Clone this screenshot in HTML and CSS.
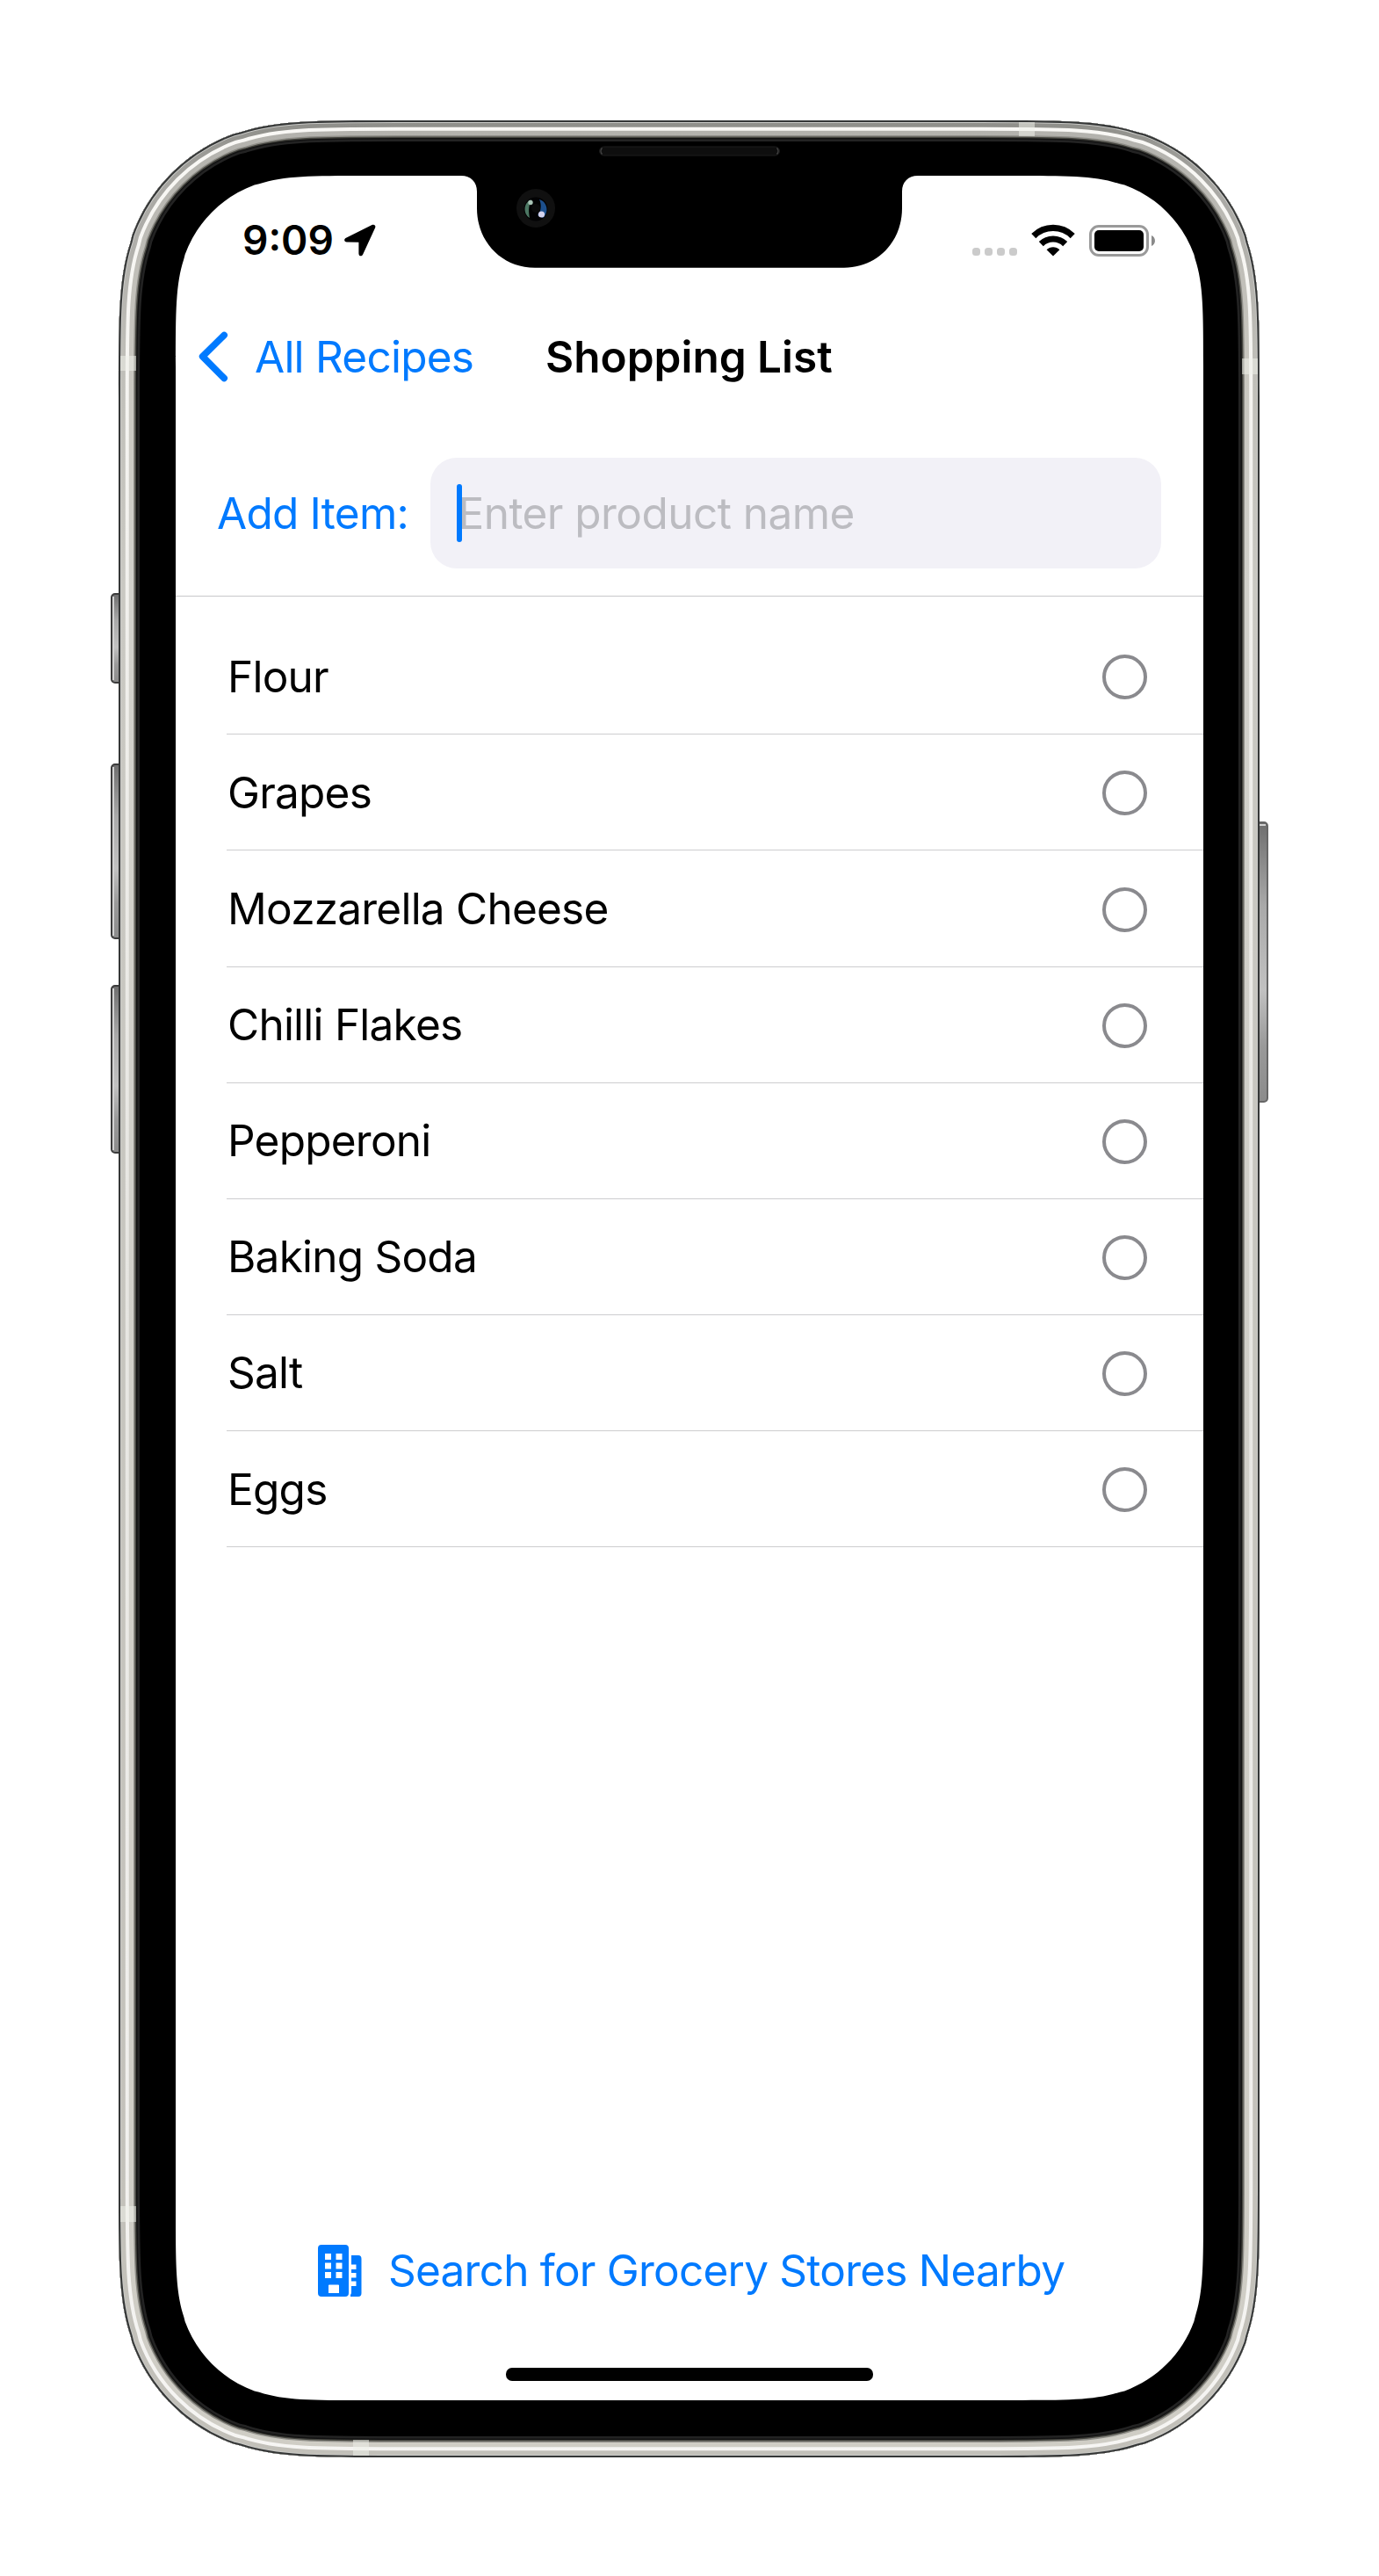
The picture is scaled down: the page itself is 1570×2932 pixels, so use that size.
FILE: index.html
```html
<!DOCTYPE html>
<html lang="en">
<head>
<meta charset="utf-8">
<title>Shopping List</title>
<link rel="stylesheet" href="styles.css">
</head>
<body>
<div class="phone">
  <svg class="frame" viewBox="0 0 1570 2932" aria-hidden="true">
    <defs>
      <path id="body" d="M451.4 137H1117.6C1208.7 137 1254.2 137 1295.3 150.56L1303.3 152.5C1356.8 172 1399 214.2 1418.5 267.7L1420.44 275.7C1434 316.8 1434 362.3 1434 453.4V2480.6C1434 2571.7 1434 2617.2 1420.44 2658.3L1418.5 2666.3C1399 2719.8 1356.8 2762 1303.3 2781.5L1295.3 2783.44C1254.2 2797 1208.7 2797 1117.6 2797H451.4C360.3 2797 314.8 2797 273.7 2783.44L265.7 2781.5C212.2 2762 170 2719.8 150.5 2666.3L148.56 2658.3C135 2617.2 135 2571.7 135 2480.6V453.4C135 362.3 135 316.8 148.56 275.7L150.5 267.7C170 214.2 212.2 172 265.7 152.5L273.7 150.56C314.8 137 360.3 137 451.4 137Z"/>
      <clipPath id="bodyClip"><use href="#body"/></clipPath>
      <linearGradient id="steel" gradientUnits="userSpaceOnUse" x1="0" y1="137" x2="0" y2="2797">
        <stop offset="0" stop-color="#8e8e89"/><stop offset=".03" stop-color="#a9a8a4"/><stop offset=".1" stop-color="#bfbeb8"/><stop offset=".2" stop-color="#c9c8c2"/><stop offset="1" stop-color="#c2c0b9"/>
      </linearGradient>
      <linearGradient id="steelInner" gradientUnits="userSpaceOnUse" x1="0" y1="137" x2="0" y2="2797">
        <stop offset="0" stop-color="#b2b1ac"/><stop offset=".1" stop-color="#c8c6bf"/><stop offset=".2" stop-color="#d2d1cb"/><stop offset="1" stop-color="#cfcdc5"/>
      </linearGradient>
      <linearGradient id="shine" gradientUnits="userSpaceOnUse" x1="0" y1="137" x2="0" y2="2797">
        <stop offset="0" stop-color="#f9f8f5"/><stop offset=".5" stop-color="#e6e5e1"/><stop offset="1" stop-color="#f6f5f3"/>
      </linearGradient>
      <linearGradient id="key" x1="0" y1="0" x2="0" y2="1">
        <stop offset="0" stop-color="#6e6e6e"/><stop offset=".3" stop-color="#a9a9a9"/><stop offset=".6" stop-color="#c1c1c1"/><stop offset=".8" stop-color="#999"/><stop offset="1" stop-color="#8b8b8b"/>
      </linearGradient>
    </defs>

    <g stroke="#3c3c3c" stroke-width="2" fill="url(#key)">
      <rect x="127" y="676" width="16" height="101" rx="4"/>
      <rect x="127" y="870" width="16" height="198" rx="4"/>
      <rect x="127" y="1122" width="16" height="190" rx="4"/>
      <rect x="1426" y="936" width="17" height="318" rx="4" stroke="#666"/>
    </g>
    <g fill="#d2d2d2">
      <rect x="128" y="679" width="2" height="95"/>
      <rect x="128" y="873" width="2" height="192"/>
      <rect x="128" y="1125" width="2" height="184"/>
      <rect x="1434" y="938" width="7" height="2"/>
    </g>

    <use href="#body" fill="#000"/>
    <g clip-path="url(#bodyClip)" fill="none">
      <use href="#body" stroke="#232323" stroke-width="48"/>
      <use href="#body" stroke="#121212" stroke-width="43"/>
      <use href="#body" stroke="#45453f" stroke-width="40"/>
      <use href="#body" stroke="#8f8e88" stroke-width="37"/>
      <use href="#body" stroke="url(#steelInner)" stroke-width="34"/>
      <use href="#body" stroke="url(#shine)" stroke-width="23.5"/>
      <use href="#body" stroke="url(#steel)" stroke-width="15.5"/>
      <use href="#body" stroke="#c9c9c6" stroke-width="6"/>
      <use href="#body" stroke="#353737" stroke-width="4"/>
      <g fill="#eef0ea" fill-opacity=".55">
        <rect x="137" y="405" width="18" height="17"/>
        <rect x="1160" y="139" width="18" height="16"/>
        <rect x="1414" y="408" width="18" height="18"/>
        <rect x="137" y="2511" width="18" height="18"/>
        <rect x="402" y="2777" width="18" height="18"/>
      </g>
    </g>

    <path fill="#fff" d="M417 200H1153C1215.4 200 1246.7 200 1274.9 209.3L1280.3 210.6C1317.1 224 1346 252.9 1359.4 289.7L1360.7 295.1C1370 323.3 1370 354.6 1370 417V2515C1370 2577.4 1370 2608.7 1360.7 2636.9L1359.4 2642.3C1346 2679.1 1317.1 2708 1280.3 2721.4L1274.9 2722.7C1246.7 2732 1215.4 2732 1153 2732H417C354.6 2732 323.3 2732 295.1 2722.7L289.7 2721.4C252.9 2708 224 2679.1 210.6 2642.3L209.3 2636.9C200 2608.7 200 2577.4 200 2515V417C200 354.6 200 323.3 209.3 295.1L210.6 289.7C224 252.9 252.9 224 289.7 210.6L295.1 209.3C323.3 200 354.6 200 417 200Z"/>
    <path d="M525 199V200C536 200 543 207 543 218V237C543 275 571 304.700 609 304.700H961C999 304.700 1027 275 1027 237V218C1027 207 1034 200 1045 200V199Z"/>

    <rect x="682.500" y="167" width="205" height="10" rx="5" fill="#0e0e0e" stroke="#1c1c1c"/>
    <path d="M685.500 168.500a5 5 0 0 0 0 7M884.500 168.500a5 5 0 0 1 0 7" fill="none" stroke="#444" stroke-width="1.500"/>
    <g transform="translate(3 0)">
      <circle cx="607" cy="237" r="22" fill="#101010"/>
      <circle cx="607" cy="238" r="13.500" fill="#020203"/>
      <path d="M602 227.500c-9 2-10 16-2 20.500c-1-6-2-13 2-20.500z" fill="#4c7763"/>
      <path d="M611 227c10 3 11 16 4 21l-6-3c4-4 5-12 2-18z" fill="#1c4f8c"/>
      <circle cx="607" cy="237" r="5" fill="#0a0a0a"/>
      <circle cx="601" cy="230.500" r="2.700" fill="#a9c4b6"/>
      <circle cx="613.500" cy="244" r="3.600" fill="#d5d3ee"/>
    </g>
  </svg>

  <main class="screen">
    <header class="status">
      <div class="clock">
        <span class="time">9:09</span>
        <svg class="locate" width="36" height="37" viewBox="0 0 36 37"><path d="M2.500 15.500L31.500 1C34.300-.2 36.200 1.800 35 4.500L21.200 34.500C19.900 37.300 16.500 36.900 16.400 33.500V20.700L2.800 20.500C-.6 20.300-.8 17 2.500 15.500Z"/></svg>
      </div>
      <div class="indicators">
        <div class="dots"><i></i><i></i><i></i><i></i></div>
        <svg class="wifi" width="50" height="37" viewBox="0 0 50 37"><g fill="none" stroke="#000" stroke-width="7.200"><path d="M2.800 13.600a31.500 31.500 0 0 1 44.400 0"/><path d="M11.300 22.600a19.500 19.500 0 0 1 27.400 0"/></g><path d="M25 36.500L17.600 29.300C21.500 25.200 28.500 25.200 32.400 29.300Z"/></svg>
        <div class="battery"><div class="level"></div></div>
        <svg class="nub" width="5" height="12" viewBox="0 0 5 12"><path d="M0 0C5.300 2 5.300 10 0 12Z"/></svg>
      </div>
    </header>

    <nav class="nav">
      <a class="back">
        <svg width="34" height="58" viewBox="0 0 34 58"><path d="M29.200 4.500L4.600 28.800L29.200 53.500"/></svg>
        <span>All Recipes</span>
      </a>
      <h1 class="title">Shopping List</h1>
    </nav>

    <section class="add">
      <label class="add-label">Add Item:</label>
      <div class="field"><span class="caret"></span><span class="placeholder">Enter product name</span></div>
    </section>

    <ul class="list">
      <li><span>Flour</span><i class="check"></i></li>
      <li><span>Grapes</span><i class="check"></i></li>
      <li><span>Mozzarella Cheese</span><i class="check"></i></li>
      <li><span>Chilli Flakes</span><i class="check"></i></li>
      <li><span>Pepperoni</span><i class="check"></i></li>
      <li><span>Baking Soda</span><i class="check"></i></li>
      <li><span>Salt</span><i class="check"></i></li>
      <li><span>Eggs</span><i class="check"></i></li>
    </ul>

    <footer class="footer">
      <a class="search">
        <svg width="50" height="59" viewBox="0 0 50 59"><path fill-rule="evenodd" d="M4 0H31Q35 0 35 4V55Q35 59 31 59H4Q0 59 0 55V4Q0 0 4 0ZM8 10V17H15V10ZM20.500 10V17H27.500V10ZM8 20.500V27.500H15V20.500ZM20.500 20.500V27.500H27.500V20.500ZM8 31V38H15V31ZM20.500 31V38H27.500V31ZM12 46V55H24V46Q24 45.500 23 45.500H13Q12 45.500 12 46ZM38 12H46Q49.500 12 49.500 16V55Q49.500 59 46 59H37V57Q38 56 38 54V47H43.500V41.500H38V37.500H43.500V32H38V28H43.500V22.500H38Z"/></svg>
        <span>Search for Grocery Stores Nearby</span>
      </a>
      <div class="home"></div>
    </footer>
  </main>
</div>
</body>
</html>
```
FILE: styles.css
```css
* { box-sizing: border-box; }

body {
  margin: 0;
  background: #fff;
  color: #000;
  font-family: Inter, "Liberation Sans", sans-serif;
  font-size: 49.5px;
  line-height: 60px;
  letter-spacing: -0.77px;
}

.phone {
  position: relative;
  width: 1570px;
  height: 2932px;
  padding: 200px;
}

.frame {
  position: absolute;
  inset: 0;
  width: 1570px;
  height: 2932px;
}

.screen {
  position: relative;
  display: flex;
  flex-direction: column;
  width: 1170px;
  height: 2532px;
}

.status {
  display: flex;
  justify-content: space-between;
  height: 147px;
  padding: 55px 54px 0 76px;
  letter-spacing: 0;
}

.clock, .indicators { display: flex; align-items: flex-start; }

.time {
  width: 104px;
  margin-top: -12px;
  font-size: 46px;
  font-weight: 600;
  white-space: nowrap;
}

.locate { margin-left: 11.5px; }

.dots { display: flex; gap: 4.7px; margin: 26.7px 16px 0 0; }
.dots i { width: 9.3px; height: 9.3px; border-radius: 3.5px; background: #cbcbcb; }

.wifi { margin-right: 16px; }

.battery {
  width: 68px;
  height: 36px;
  margin: 1px 3px 0 0;
  padding: 3px;
  border: 3px solid #9a9a9a;
  border-radius: 11px;
}
.level { height: 24px; border-radius: 5px; background: #000; }
.nub { margin-top: 13px; fill: #8a8a8a; }

.nav {
  display: flex;
  align-items: center;
  height: 118px;
  padding-left: 26px;
}

.back { display: flex; align-items: center; color: #007aff; width: 395px; white-space: nowrap; }
.back svg { flex: none; margin-right: 30px; fill: none; stroke: #007aff; stroke-width: 7.6; stroke-linecap: round; stroke-linejoin: round; }

.title { margin: 0; font-size: 49.5px; font-weight: 600; letter-spacing: 0; white-space: nowrap; }

.add {
  display: flex;
  align-items: center;
  height: 214px;
  padding: 24px 48px 0 47px;
  border-bottom: 1px solid #c8c8ca;
}

.add-label { width: 243px; color: #007aff; white-space: nowrap; }

.field {
  position: relative;
  flex: 1;
  display: flex;
  align-items: center;
  height: 126px;
  padding-left: 31.5px;
  border-radius: 30px;
  background: #f2f1f7;
  color: #bcbcc1;
  letter-spacing: -0.55px;
  white-space: nowrap;
}

.caret {
  position: absolute;
  left: 29.5px;
  top: 30px;
  width: 6.5px;
  height: 66px;
  border-radius: 3px;
  background: #007aff;
}

.list { margin: 25.3px 0 0; padding: 0 0 0 58px; list-style: none; }
.list li {
  display: flex;
  align-items: center;
  justify-content: space-between;
  height: 132.1px;
  border-bottom: 1px solid #cdcdcf;
  padding: 0 64px 0 1px;
}

.check { width: 51px; height: 51px; margin-top: 2px; border: 4px solid #8a8a8e; border-radius: 50%; }

.footer {
  display: flex;
  flex-direction: column;
  align-items: center;
  justify-content: space-between;
  height: 178px;
  margin-top: auto;
  padding-bottom: 22px;
}

.search { display: flex; align-items: center; align-self: flex-start; margin-left: 162px; gap: 30px; color: #007aff; white-space: nowrap; }
.search svg { flex: none; fill: #007aff; }

.home { width: 418px; height: 15px; border-radius: 7px; background: #000; }
```
